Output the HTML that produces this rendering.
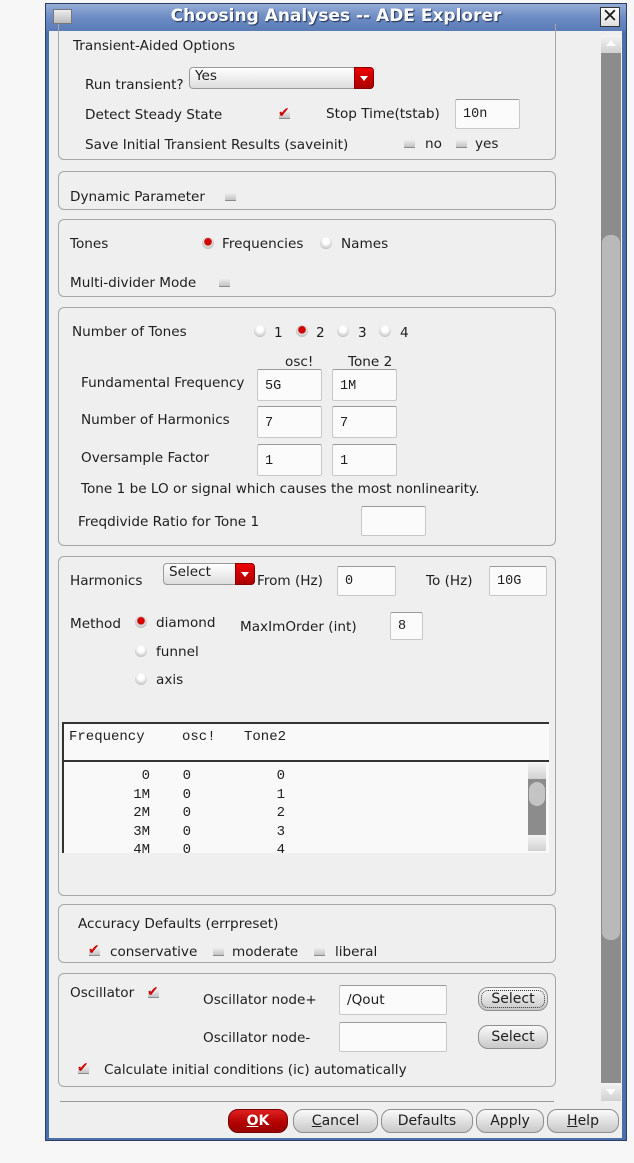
<!DOCTYPE html>
<html><head><meta charset="utf-8"><style>
*{margin:0;padding:0;box-sizing:border-box}
body{width:634px;height:1163px;background:#f7f7f7;position:relative;overflow:hidden;font-family:"DejaVu Sans","Liberation Sans",sans-serif;font-size:13.6px;color:#1e1e1e}
.a{position:absolute}
.t{position:absolute;white-space:nowrap;line-height:16px}
.m{font-family:"Liberation Mono","DejaVu Sans Mono",monospace;font-size:14px}
.box{position:absolute;border:1px solid #a6a6a6;border-radius:6px;left:58px;width:498px}
.f{position:absolute;background:#fbfbfb;border:1px solid #c8c8c8;border-top-color:#9a9a9a;border-radius:2px;height:32px;padding:10px 0 0 7px;font-family:"Liberation Mono",monospace;font-size:13.5px;line-height:14px}
.cb{position:absolute;width:11px;height:8px;background:linear-gradient(#ececec,#c4c4c4);border-bottom:1px solid #8a8a8a}
.ck{position:absolute;color:#d00000;font-size:14px;line-height:12px;font-weight:bold}
.rd{position:absolute;width:12px;height:12px;border-radius:50%;background:radial-gradient(circle at 50% 35%,#fff 30%,#ccc 70%,#999 100%)}
.rd.on{background:radial-gradient(circle at 50% 40%,#e00000 0,#c00 35%,#ddd 45%,#aaa 100%)}
.btn{position:absolute;height:24px;border:1px solid #8e8e8e;border-radius:10px;background:linear-gradient(#fafafa,#dcdcdc 60%,#c8c8c8);text-align:center;line-height:22px;font-size:14px}
.dd{position:absolute;height:22px;border:1px solid #999;border-radius:4px;background:linear-gradient(#fff,#ddd);padding-left:5px;line-height:16px}
.dd i{position:absolute;right:-1px;top:-1px;width:20px;height:22px;background:linear-gradient(#e00,#a00);border-radius:0 4px 4px 0;border:1px solid #800}
.dd i:after{content:"";position:absolute;left:5px;top:8px;border:4px solid transparent;border-top:5px solid #fff}
.c{position:absolute;width:40px;text-align:right}
</style></head><body>
<div class="a" style="left:45px;top:3px;width:582px;height:1138px;background:#4d6fa8;border:1px solid #2b3f66"></div>
<div class="a" style="left:46px;top:4px;width:580px;height:27px;background:linear-gradient(#95acd6,#6d8cc4 50%,#5a7bb6)"></div>
<div class="a" style="left:53px;top:9px;width:19px;height:15px;background:linear-gradient(#eee,#bbb);border:1px solid #777"></div>
<div class="t" style="left:0;width:672px;text-align:center;top:6px;color:#fff;font-weight:bold;font-size:17px;line-height:20px;text-shadow:1px 1px 1px #203050">Choosing Analyses -- ADE Explorer</div>
<div class="a" style="left:600px;top:7px;width:20px;height:20px;background:linear-gradient(#fff,#ddd);border:1px solid #333;font-size:19px;line-height:17px;text-align:center;font-family:'DejaVu Sans'">✕</div>
<div class="a" style="left:49px;top:31px;width:573px;height:1107px;background:#efefef"></div>
<div class="a" style="left:601px;top:35px;width:20px;height:1066px;background:#8c8c8c"></div>
<div class="a" style="left:601px;top:35px;width:20px;height:18px;background:linear-gradient(#f4f4f4,#d0d0d0)"></div>
<div class="a" style="left:606px;top:40px;border:5px solid transparent;border-bottom:6px solid #fff;border-top:0"></div>
<div class="a" style="left:602px;top:235px;width:18px;height:705px;background:#b9b9b9;border-radius:8px"></div>
<div class="a" style="left:601px;top:1083px;width:20px;height:18px;background:linear-gradient(#f4f4f4,#d0d0d0)"></div>
<div class="a" style="left:606px;top:1089px;border:5px solid transparent;border-top:6px solid #fff;border-bottom:0"></div>

<div class="box" style="top:24px;height:136px;border-top:none;border-radius:0 0 6px 6px"></div>
<div class="t" style="left:73px;top:38px">Transient-Aided Options</div>
<div class="t" style="left:85px;top:77px">Run transient?</div>
<div class="dd" style="left:189px;top:67px;width:185px">Yes<i></i></div>
<div class="t" style="left:85px;top:107px">Detect Steady State</div>
<div class="cb" style="left:279px;top:111px"></div><div class="ck" style="left:278px;top:107px">✔</div>
<div class="t" style="left:326px;top:106px">Stop Time(tstab)</div>
<div class="f" style="left:455px;top:99px;width:65px;height:30px;padding-top:8px">10n</div>
<div class="t" style="left:85px;top:137px">Save Initial Transient Results (saveinit)</div>
<div class="cb" style="left:404px;top:140px"></div><div class="t" style="left:425px;top:136px">no</div>
<div class="cb" style="left:456px;top:140px"></div><div class="t" style="left:475px;top:136px">yes</div>

<div class="box" style="top:171px;height:39px"></div>
<div class="t" style="left:70px;top:189px">Dynamic Parameter</div>
<div class="cb" style="left:225px;top:193px"></div>

<div class="box" style="top:219px;height:78px"></div>
<div class="t" style="left:70px;top:236px">Tones</div>
<div class="rd on" style="left:202px;top:237px"></div><div class="t" style="left:222px;top:236px">Frequencies</div>
<div class="rd" style="left:320px;top:237px"></div><div class="t" style="left:341px;top:236px">Names</div>
<div class="t" style="left:70px;top:275px">Multi-divider Mode</div>
<div class="cb" style="left:219px;top:279px"></div>

<div class="box" style="top:307px;height:239px"></div>
<div class="t" style="left:72px;top:324px">Number of Tones</div>
<div class="rd" style="left:254px;top:325px"></div><div class="t" style="left:274px;top:325px">1</div>
<div class="rd on" style="left:296px;top:325px"></div><div class="t" style="left:316px;top:325px">2</div>
<div class="rd" style="left:337px;top:325px"></div><div class="t" style="left:358px;top:325px">3</div>
<div class="rd" style="left:379px;top:325px"></div><div class="t" style="left:400px;top:325px">4</div>
<div class="t" style="left:285px;top:354px">osc!</div>
<div class="t" style="left:348px;top:354px">Tone 2</div>
<div class="t" style="left:81px;top:375px">Fundamental Frequency</div>
<div class="f" style="left:257px;top:369px;width:65px">5G</div>
<div class="f" style="left:332px;top:369px;width:65px">1M</div>
<div class="t" style="left:81px;top:412px">Number of Harmonics</div>
<div class="f" style="left:257px;top:406px;width:65px">7</div>
<div class="f" style="left:332px;top:406px;width:65px">7</div>
<div class="t" style="left:81px;top:450px">Oversample Factor</div>
<div class="f" style="left:257px;top:444px;width:65px">1</div>
<div class="f" style="left:332px;top:444px;width:65px">1</div>
<div class="t" style="left:81px;top:481px">Tone 1 be LO or signal which causes the most nonlinearity.</div>
<div class="t" style="left:78px;top:514px">Freqdivide Ratio for Tone 1</div>
<div class="f" style="left:361px;top:506px;width:65px;height:30px"></div>

<div class="box" style="top:556px;height:340px"></div>
<div class="t" style="left:70px;top:573px">Harmonics</div>
<div class="dd" style="left:163px;top:563px;width:92px">Select<i></i></div>
<div class="t" style="left:257px;top:573px">From (Hz)</div>
<div class="f" style="left:337px;top:566px;width:59px;height:30px;padding-top:8px">0</div>
<div class="t" style="left:426px;top:573px">To (Hz)</div>
<div class="f" style="left:489px;top:566px;width:58px;height:30px;padding-top:8px">10G</div>
<div class="t" style="left:70px;top:616px">Method</div>
<div class="rd on" style="left:135px;top:616px"></div><div class="t" style="left:156px;top:615px">diamond</div>
<div class="rd" style="left:135px;top:645px"></div><div class="t" style="left:156px;top:644px">funnel</div>
<div class="rd" style="left:135px;top:673px"></div><div class="t" style="left:156px;top:672px">axis</div>
<div class="t" style="left:240px;top:619px">MaxImOrder (int)</div>
<div class="f" style="left:390px;top:612px;width:33px;height:28px;padding-top:7px">8</div>
<div class="a" style="left:62px;top:722px;width:487px;height:38px;background:#f9f9f9;border-top:2px solid #333;border-left:2px solid #333"></div>
<div class="t m" style="left:69px;top:729px">Frequency</div>
<div class="t m" style="left:182px;top:729px">osc!</div>
<div class="t m" style="left:244px;top:729px">Tone2</div>
<div class="a m" style="left:62px;top:760px;width:487px;height:93px;background:#f9f9f9;border-top:2px solid #333;border-left:2px solid #333;overflow:hidden;line-height:18.5px">
<div class="c" style="left:46px;top:5px">0<br>1M<br>2M<br>3M<br>4M</div>
<div class="c" style="left:87px;top:5px">0<br>0<br>0<br>0<br>0</div>
<div class="c" style="left:181px;top:5px">0<br>1<br>2<br>3<br>4</div>
</div>
<div class="a" style="left:528px;top:763px;width:18px;height:88px;background:#8c8c8c"></div>
<div class="a" style="left:528px;top:763px;width:18px;height:16px;background:linear-gradient(#f4f4f4,#d0d0d0)"></div>
<div class="a" style="left:529px;top:782px;width:16px;height:24px;background:#c4c4c4;border-radius:8px"></div>
<div class="a" style="left:528px;top:835px;width:18px;height:16px;background:linear-gradient(#f4f4f4,#d0d0d0)"></div>

<div class="box" style="top:904px;height:59px"></div>
<div class="t" style="left:78px;top:916px">Accuracy Defaults (errpreset)</div>
<div class="cb" style="left:89px;top:948px"></div><div class="ck" style="left:88px;top:944px">✔</div>
<div class="t" style="left:110px;top:944px">conservative</div>
<div class="cb" style="left:213px;top:948px"></div><div class="t" style="left:232px;top:944px">moderate</div>
<div class="cb" style="left:314px;top:948px"></div><div class="t" style="left:335px;top:944px">liberal</div>

<div class="box" style="top:973px;height:114px"></div>
<div class="t" style="left:70px;top:985px">Oscillator</div>
<div class="cb" style="left:148px;top:990px"></div><div class="ck" style="left:147px;top:986px">✔</div>
<div class="t" style="left:203px;top:992px">Oscillator node+</div>
<div class="f" style="left:339px;top:985px;width:108px;height:30px;padding-top:7px;font-family:'DejaVu Sans';font-size:13.6px">/Qout</div>
<div class="btn" style="left:478px;top:987px;width:70px;outline:1px dotted #333;outline-offset:-4px">Select</div>
<div class="t" style="left:203px;top:1030px">Oscillator node-</div>
<div class="f" style="left:339px;top:1022px;width:108px;height:30px"></div>
<div class="btn" style="left:478px;top:1025px;width:70px">Select</div>
<div class="cb" style="left:78px;top:1066px"></div><div class="ck" style="left:77px;top:1062px">✔</div>
<div class="t" style="left:104px;top:1062px">Calculate initial conditions (ic) automatically</div>

<div class="a" style="left:60px;top:1101px;width:494px;height:1px;background:#999"></div>
<div class="btn" style="left:228px;top:1109px;width:60px;background:linear-gradient(#e02020,#b00000 60%,#900);border-color:#700;color:#fff;font-weight:bold"><u>O</u>K</div>
<div class="btn" style="left:293px;top:1109px;width:85px"><u>C</u>ancel</div>
<div class="btn" style="left:381px;top:1109px;width:92px">Defaults</div>
<div class="btn" style="left:476px;top:1109px;width:68px">Apply</div>
<div class="btn" style="left:547px;top:1109px;width:72px"><u>H</u>elp</div>
</body></html>
